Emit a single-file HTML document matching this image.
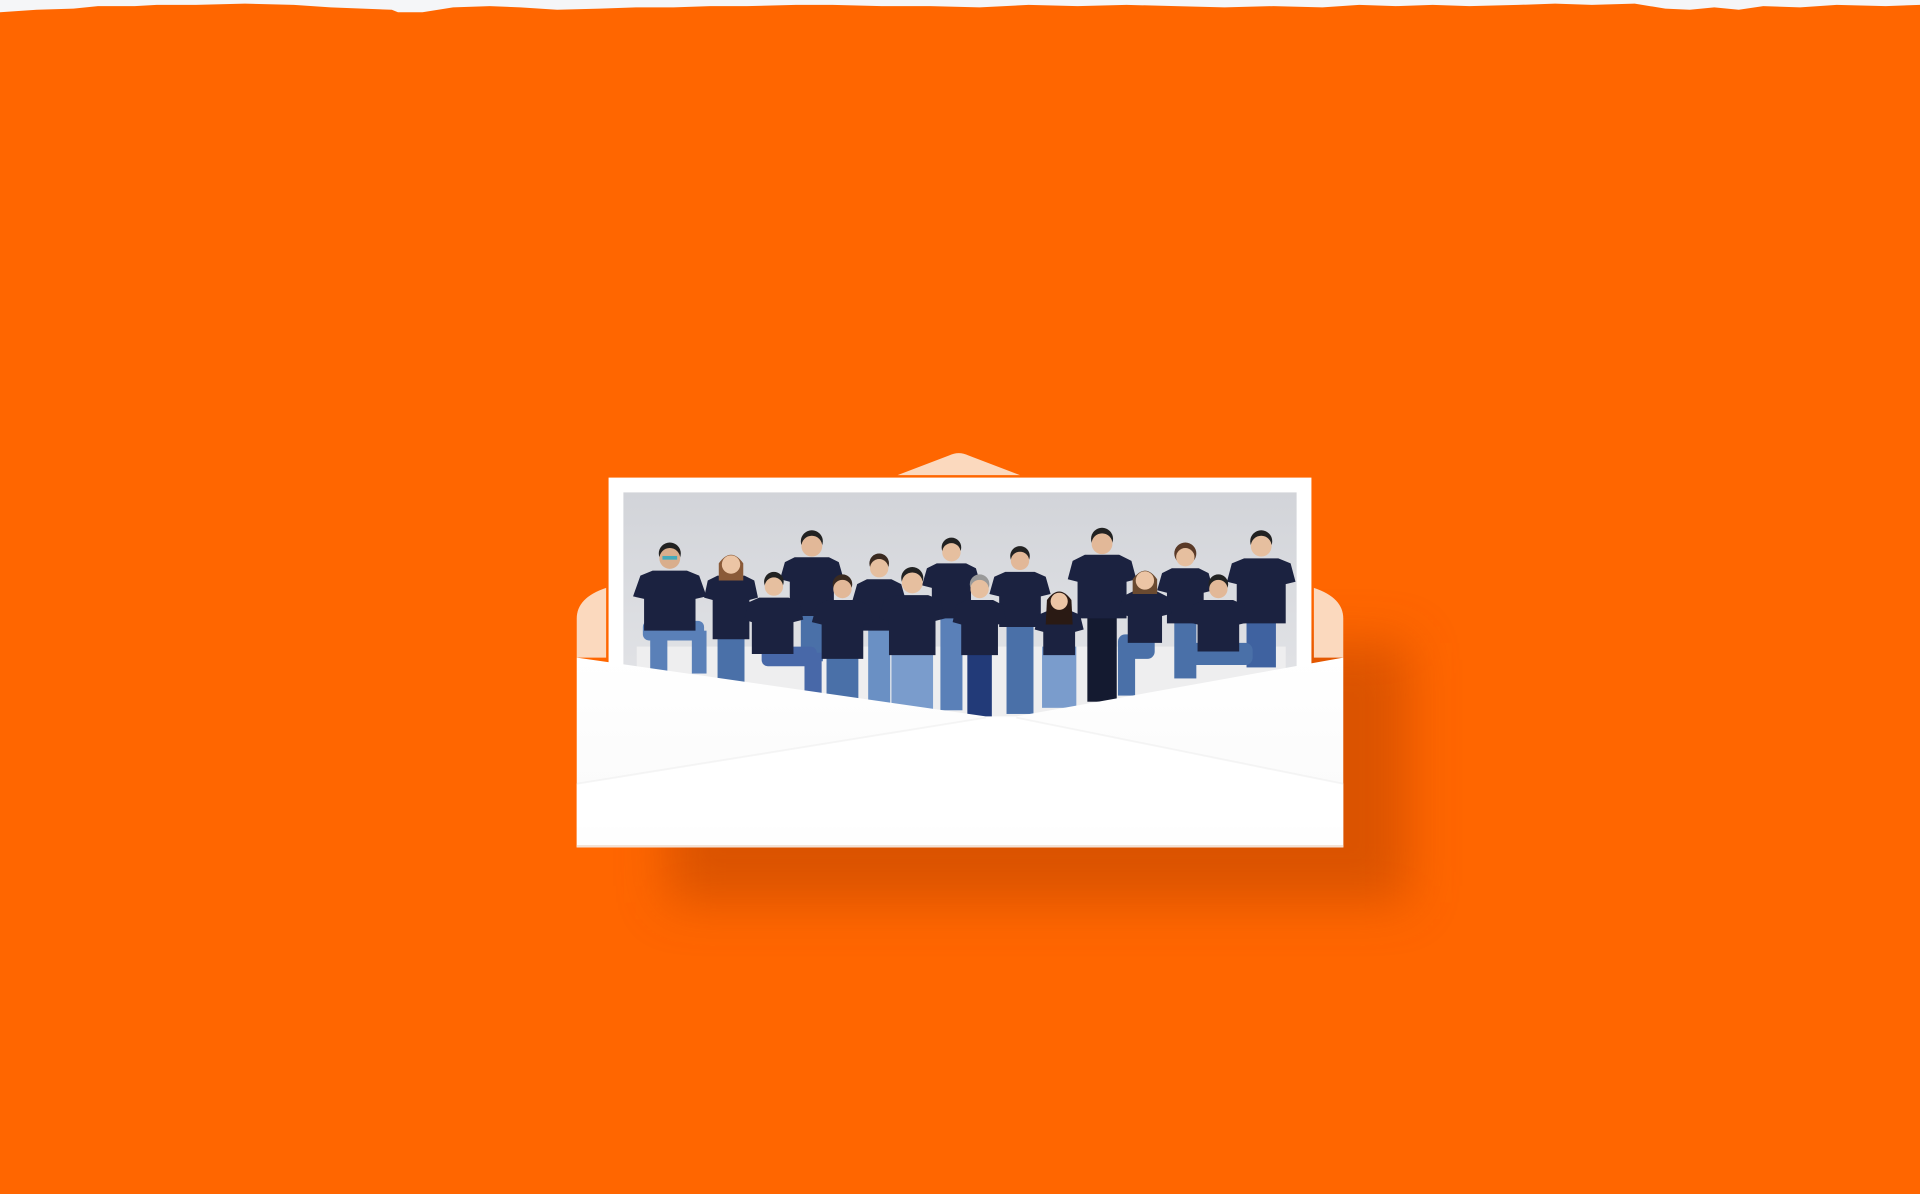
<!DOCTYPE html>
<html><head><meta charset="utf-8"><style>
html,body{margin:0;padding:0;width:1920px;height:1194px;overflow:hidden;background:#FF6600}
svg{display:block}
</style></head><body>
<svg width="1920" height="1194" viewBox="0 0 1568 975" preserveAspectRatio="none" xmlns="http://www.w3.org/2000/svg">
<defs>
<filter id="b" x="-30%" y="-30%" width="160%" height="160%"><feGaussianBlur stdDeviation="20"/></filter>
<linearGradient id="bg" x1="0" y1="0" x2="0" y2="1"><stop offset="0" stop-color="#d2d4d9"/><stop offset="1" stop-color="#e6e7ea"/></linearGradient>
<linearGradient id="sh1" x1="0" y1="0" x2="0" y2="1"><stop offset="0" stop-color="#fff"/><stop offset="0.85" stop-color="#fafafa"/><stop offset="1" stop-color="#efefef"/></linearGradient>
<clipPath id="pc"><rect x="509" y="402" width="550" height="200"/></clipPath>
</defs>
<rect width="1568" height="975" fill="#FF6600"/>
<polygon fill="#f5f6f8" points="0,0 1568,0 1568,4 1540,5 1500,4 1470,6 1440,5 1420,8 1400,6 1380,8 1360,7 1335,3 1300,4 1270,3 1240,4 1200,5 1170,4 1140,5 1110,4 1080,6 1040,5 1000,6 960,5 920,4 880,5 840,4 800,6 760,5 720,5 680,4 650,4 610,5 580,5 550,6 520,6 490,7 455,8 425,6 400,5 370,6 345,10 325,10 320,8 270,6 240,4 200,3 160,4 128,4 110,5 80,5 60,7 30,8 0,10"/>
<!-- shadow -->
<rect x="545" y="525" width="605" height="212" fill="#C84800" opacity="0.65" filter="url(#b)"/>
<!-- back flap -->
<path d="M733,388 L775,372 Q783,368 791,372 L833,388 Z" fill="#FBD9BE"/>
<path d="M471,537 L471,505 Q471,488 495,480 L495,537 Z" fill="#FBD9BE"/>
<path d="M1097,537 L1097,505 Q1097,488 1073,480 L1073,537 Z" fill="#FBD9BE"/>
<!-- card -->
<rect x="497" y="390" width="574" height="160" fill="#fff"/>
<g clip-path="url(#pc)">
<rect x="509" y="402" width="550" height="200" fill="url(#bg)"/>
<rect x="520" y="528" width="530" height="60" fill="#eeeeef"/>
<!-- back row -->
<g transform="translate(663,445)"><rect x="-9" y="45" width="18" height="50" fill="#4a70a8"/><path d="M-22,14 L-14,10 L14,10 L22,14 L26,28 L18,30 L18,58 L-18,58 L-18,30 L-26,28Z" fill="#1b2240"/><circle cy="-3" r="9" fill="#222"/><circle cy="1" r="8.5" fill="#e2b898"/></g>
<g transform="translate(777,450)"><rect x="-9" y="45" width="18" height="85" fill="#5a80b8"/><path d="M-20,14 L-12,10 L12,10 L20,14 L24,28 L16,30 L16,55 L-16,55 L-16,30 L-24,28Z" fill="#1b2240"/><circle cy="-3" r="8" fill="#222"/><circle cy="1" r="7.5" fill="#e6bf9f"/></g>
<g transform="translate(900,443)"><rect x="-12" y="50" width="24" height="80" fill="#141a30"/><path d="M-24,15 L-14,10 L14,10 L24,15 L28,30 L20,32 L20,62 L-20,62 L-20,32 L-28,30Z" fill="#1b2240"/><circle cy="-3" r="9" fill="#222"/><circle cy="1" r="8.5" fill="#e2b898"/></g>
<g transform="translate(1030,445)"><rect x="-12" y="50" width="24" height="50" fill="#3f62a0"/><path d="M-24,15 L-14,11 L14,11 L24,15 L28,30 L20,32 L20,64 L-20,64 L-20,32 L-28,30Z" fill="#1b2240"/><circle cy="-3" r="9" fill="#222"/><circle cy="1" r="8.5" fill="#e6bf9f"/></g>
<g transform="translate(968,454)"><rect x="-9" y="45" width="18" height="55" fill="#4a70a8"/><path d="M-19,14 L-11,10 L11,10 L19,14 L23,28 L15,30 L15,55 L-15,55 L-15,30 L-23,28Z" fill="#1b2240"/><circle cy="-2" r="9" fill="#5a3a28"/><circle cy="1" r="7.5" fill="#e6bf9f"/></g>
<g transform="translate(718,463)"><rect x="-9" y="45" width="18" height="72" fill="#6a90c4"/><path d="M-18,14 L-10,10 L10,10 L18,14 L22,28 L14,30 L14,52 L-14,52 L-14,30 L-22,28Z" fill="#1b2240"/><circle cy="-3" r="8" fill="#3a2a20"/><circle cy="1" r="7.5" fill="#e6bf9f"/></g>
<g transform="translate(833,457)"><rect x="-11" y="48" width="22" height="78" fill="#4a70a8"/><path d="M-21,14 L-12,10 L12,10 L21,14 L25,28 L17,30 L17,55 L-17,55 L-17,30 L-25,28Z" fill="#1b2240"/><circle cy="-3" r="8" fill="#222"/><circle cy="1" r="7.5" fill="#e2b898"/></g>
<g transform="translate(547,455)"><rect x="-22" y="52" width="50" height="16" rx="5" fill="#5a80b8"/><rect x="-16" y="55" width="14" height="40" fill="#5a80b8"/><rect x="18" y="60" width="12" height="35" fill="#5a80b8"/><path d="M-24,15 L-14,11 L14,11 L24,15 L30,32 L21,34 L21,60 L-21,60 L-21,34 L-30,32Z" fill="#1b2240"/><circle cy="-3" r="9" fill="#222"/><circle cy="1" r="8.5" fill="#d9ae8c"/><rect x="-6" y="-1" width="12" height="3" fill="#4ab"/></g>
<g transform="translate(597,460)"><rect x="-11" y="55" width="22" height="45" fill="#4a70a8"/><path d="M-19,14 L-11,10 L11,10 L19,14 L22,28 L15,30 L15,62 L-15,62 L-15,30 L-22,28Z" fill="#1b2240"/><path d="M-10,14 L-10,0 Q0,-14 10,0 L10,14Z" fill="#8a5a38"/><circle cy="1" r="7.5" fill="#ecc5a5"/></g>
<!-- front row -->
<g transform="translate(632,478)"><rect x="-10" y="50" width="45" height="16" rx="5" fill="#4868a8"/><rect x="25" y="55" width="14" height="38" fill="#4868a8"/><path d="M-21,14 L-12,10 L12,10 L21,14 L24,28 L16,30 L16,56 L-18,56 L-18,30 L-24,28Z" fill="#1b2240"/><circle cy="-3" r="8" fill="#222"/><circle cy="1" r="7.5" fill="#e6bf9f"/></g>
<g transform="translate(688,480)"><rect x="-13" y="55" width="26" height="45" fill="#4a70a8"/><path d="M-21,14 L-12,10 L12,10 L21,14 L25,28 L17,30 L17,58 L-17,58 L-17,30 L-25,28Z" fill="#1b2240"/><circle cy="-3" r="8" fill="#3a2a20"/><circle cy="1" r="7.5" fill="#e2b898"/></g>
<g transform="translate(745,475)"><rect x="-17" y="55" width="34" height="55" fill="#7a9ccc"/><path d="M-23,15 L-13,11 L13,11 L23,15 L27,30 L19,32 L19,60 L-19,60 L-19,32 L-27,30Z" fill="#1b2240"/><circle cy="-3" r="9" fill="#222"/><circle cy="1" r="8.5" fill="#e6bf9f"/></g>
<g transform="translate(800,480)"><rect x="-10" y="45" width="20" height="65" fill="#223a78"/><path d="M-19,14 L-11,10 L11,10 L19,14 L22,28 L15,30 L15,55 L-15,55 L-15,30 L-22,28Z" fill="#1b2240"/><circle cy="-3" r="8" fill="#999"/><circle cy="1" r="7.5" fill="#e6bf9f"/></g>
<g transform="translate(865,490)"><rect x="-14" y="38" width="28" height="50" fill="#7a9ccc"/><path d="M-17,12 L-10,9 L10,9 L17,12 L20,24 L13,26 L13,45 L-13,45 L-13,26 L-20,24Z" fill="#1b2240"/><path d="M-11,20 L-10,0 Q0,-14 10,0 L11,20Z" fill="#2a1a14"/><circle cy="1" r="7" fill="#ecc5a5"/></g>
<g transform="translate(935,473)"><rect x="-22" y="45" width="30" height="20" rx="6" fill="#4a70a8"/><rect x="-22" y="55" width="14" height="40" fill="#4a70a8"/><path d="M-18,14 L-10,10 L10,10 L18,14 L22,28 L14,30 L14,52 L-14,52 L-14,30 L-22,28Z" fill="#1b2240"/><path d="M-10,12 L-10,0 Q0,-14 10,0 L10,12Z" fill="#6a4a30"/><circle cy="1" r="7.5" fill="#ecc5a5"/></g>
<g transform="translate(995,480)"><rect x="-28" y="45" width="56" height="18" rx="6" fill="#4a70a8"/><path d="M-21,14 L-12,10 L12,10 L21,14 L25,28 L17,30 L17,52 L-17,52 L-17,30 L-25,28Z" fill="#1b2240"/><circle cy="-3" r="8" fill="#222"/><circle cy="1" r="7.5" fill="#e2b898"/></g>
</g>
<!-- envelope front -->
<polygon points="471,537 805,585 830,585 1097,537 1097,692 471,692" fill="url(#sh1)"/>
<polygon points="471,640 805,586 830,586 1097,640 1097,692 471,692" fill="#fff" opacity="0.9"/>
<path d="M471,640 L805,586 M830,586 L1097,640" stroke="#ececec" stroke-width="1.5" opacity="0.5" fill="none"/>
<rect x="471" y="690" width="626" height="2" fill="#f3e2d6"/>
</svg>
</body></html>
